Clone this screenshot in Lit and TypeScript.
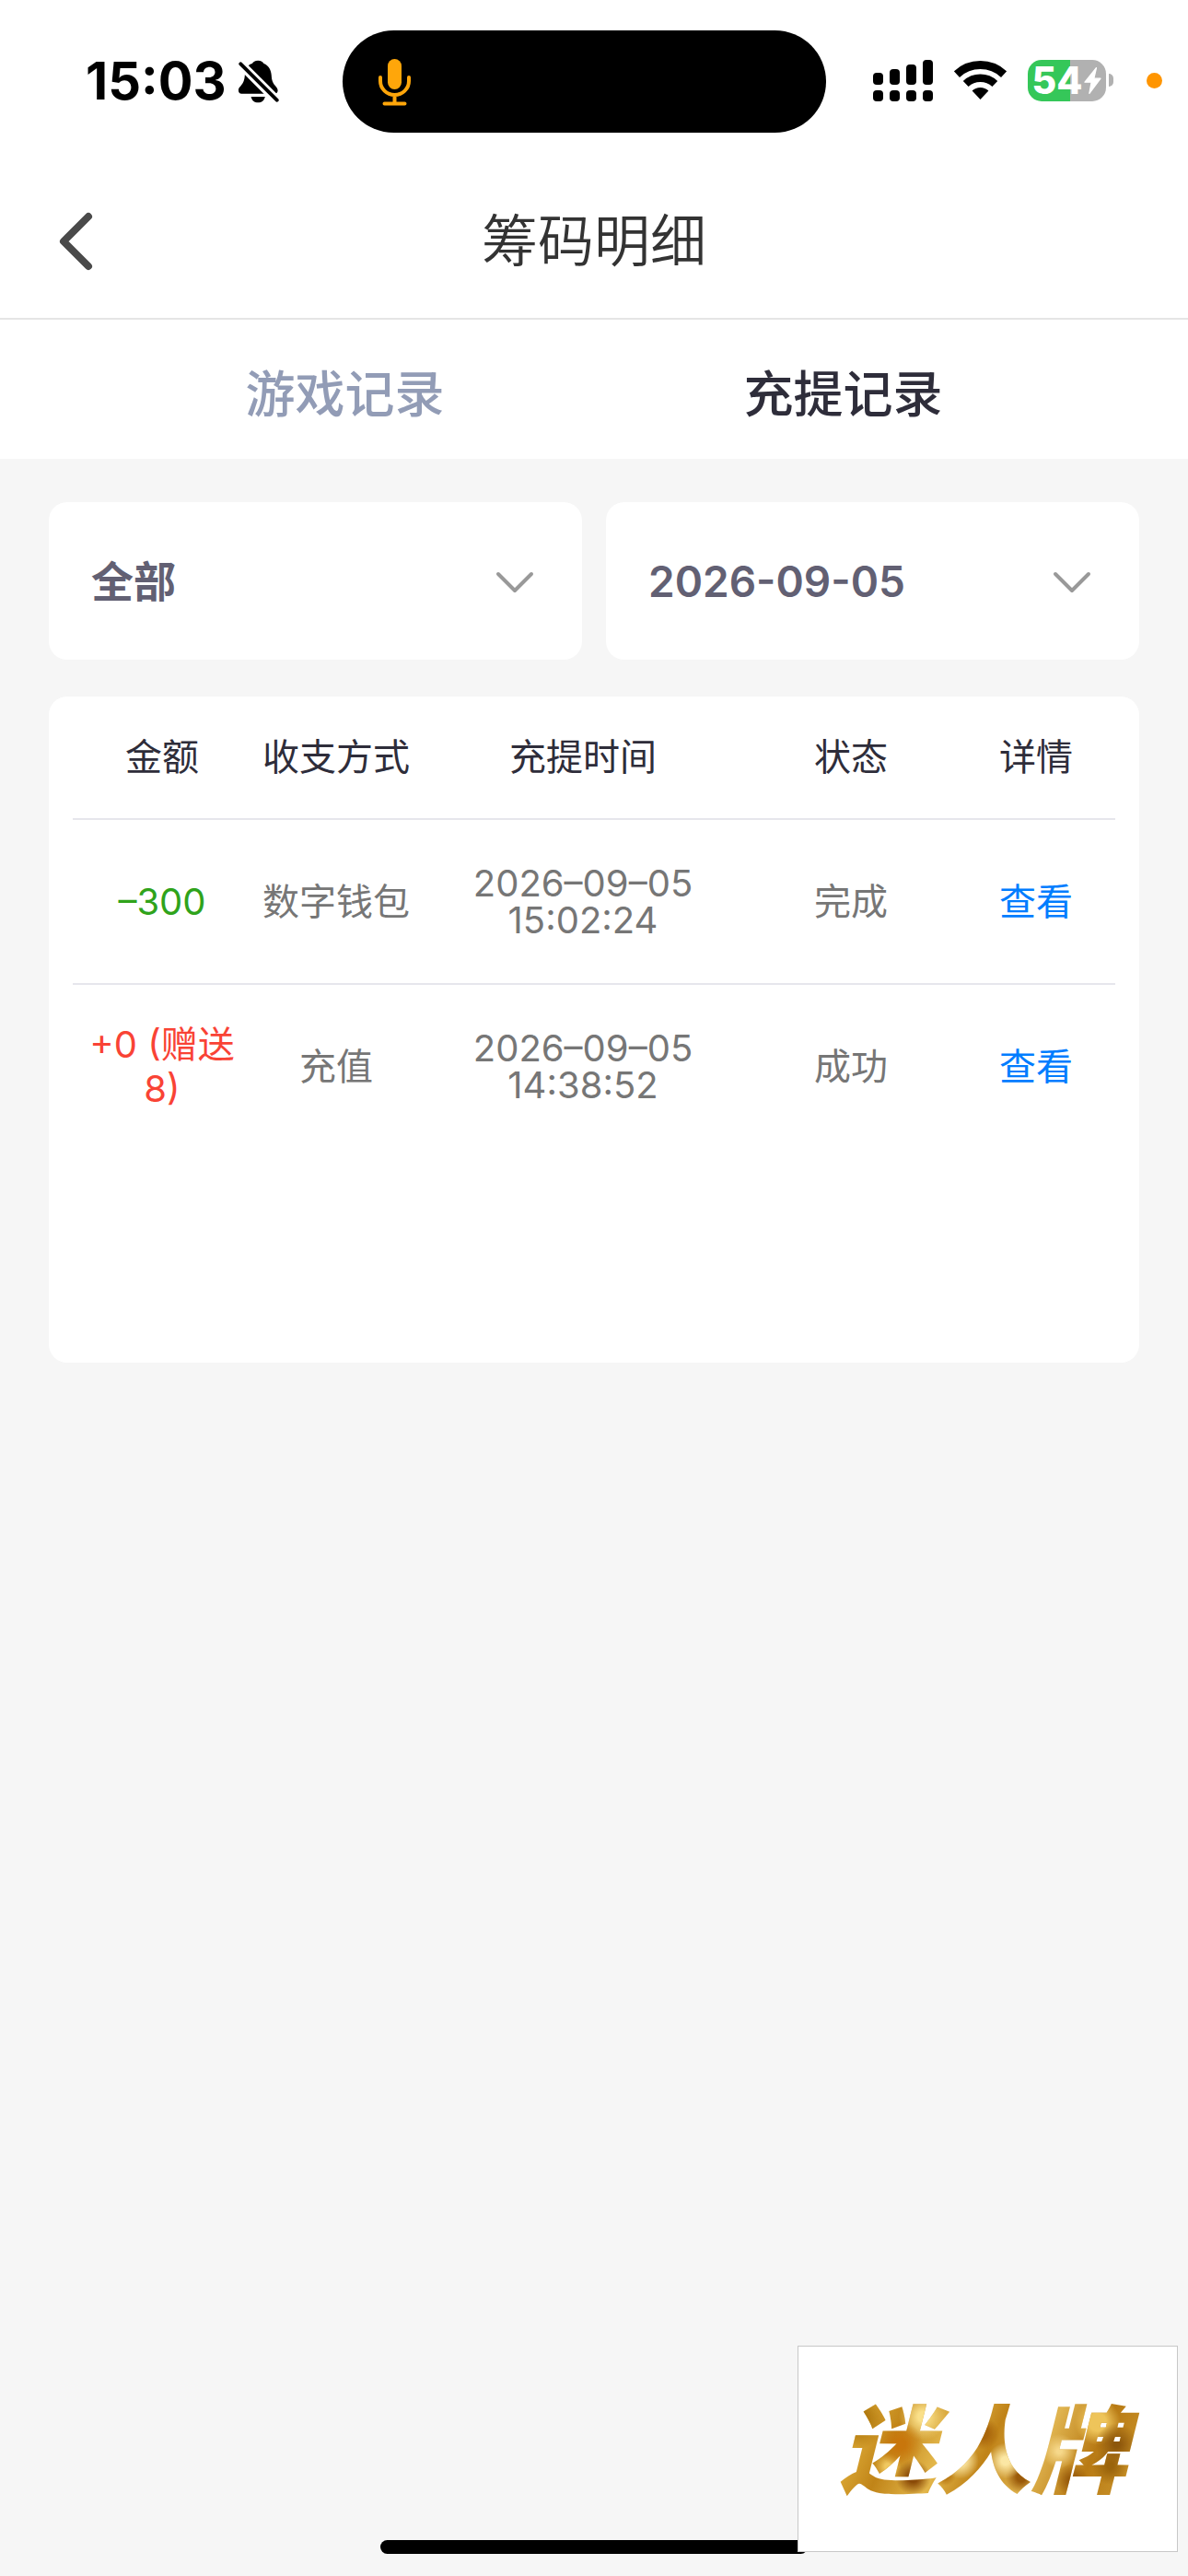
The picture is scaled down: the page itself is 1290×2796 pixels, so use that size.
import { LitElement, html, css, svg } from "lit";
import { customElement, state } from "lit/decorators.js";

interface LedgerRow {
  amount: string;
  tone: "out" | "in";
  method: string;
  date: string;
  time: string;
  status: string;
}

const ROWS: LedgerRow[] = [
  { amount: "–300", tone: "out", method: "数字钱包", date: "2026–09–05", time: "15:02:24", status: "完成" },
  { amount: "+0 (赠送8)", tone: "in", method: "充值", date: "2026–09–05", time: "14:38:52", status: "成功" },
];

const SIGNAL_BARS = [
  { x: 0, y: 14 },
  { x: 18, y: 10 },
  { x: 36, y: 5 },
  { x: 54, y: 0 },
];

@customElement("status-bar")
export class StatusBar extends LitElement {
  static styles = css`
    :host {
      display: grid;
      grid-template-columns: 372fr 525fr 393fr;
      align-items: center;
      padding: 33px 0 34px;
      color: #000;
    }
    .left {
      display: flex;
      align-items: center;
      gap: 12px;
      padding: 0 0 1px 93px;
    }
    .clock {
      font-size: 56px;
      line-height: 56px;
      font-weight: 700;
    }
    .island {
      box-sizing: border-box;
      display: flex;
      align-items: center;
      height: 111px;
      padding: 0 39px;
      border-radius: 56px;
      background: #000;
    }
    .right {
      display: flex;
      align-items: center;
      justify-content: flex-end;
      padding: 0 28px 3px 0;
    }
    .wifi {
      margin: 0 23px;
    }
    .battery {
      display: flex;
      align-items: center;
      justify-content: center;
      gap: 2px;
      width: 85px;
      height: 45px;
      border-radius: 15px;
      background: linear-gradient(90deg, #35c759 54%, #b1b1b1 54%);
      color: #fff;
      font-size: 41px;
      line-height: 45px;
      font-weight: 800;
    }
    .nub {
      width: 5px;
      height: 14px;
      margin: 0 36px 0 3px;
      border-radius: 0 7px 7px 0;
      background: #b1b1b1;
    }
    .dot {
      width: 17px;
      height: 17px;
      border-radius: 50%;
      background: #ff9500;
    }
    svg {
      display: block;
      flex: none;
    }
  `;

  render() {
    return html`
      <div class="left">
        <span class="clock">15:03</span>
        <svg width="45" height="47" viewBox="54 42 134 142" aria-hidden="true">
          <path d="M120 44C110 44 104 48 101 54C86 58 79 70 77 88C76 112 70 120 60 131C52 140 56 153 66 153H174C186 153 188 140 180 131C168 118 165 110 164 92C163 74 154 60 139 54C136 48 130 44 120 44Z" />
          <path d="M97 163H143C140 176 132 182 120 182C108 182 100 176 97 163Z" />
          <path d="M56 49L190 183" stroke="#fff" stroke-width="30" />
          <path d="M63 55L182 174" stroke="#000" stroke-width="12" stroke-linecap="round" />
        </svg>
      </div>
      <div class="island">
        <svg width="35" height="52" viewBox="0 0 35 52" fill="none" stroke="#ffa60a" stroke-width="4" stroke-linecap="round" aria-hidden="true">
          <rect x="10" y="1" width="15" height="33" rx="7.5" fill="#ffa60a" stroke="none" />
          <path d="M2 21v4a15.5 15 0 0 0 31 0v-4M17.5 40v9M6.5 49.5h22" />
        </svg>
      </div>
      <div class="right">
        <svg width="65" height="45" viewBox="0 0 65 45" aria-hidden="true">
          ${SIGNAL_BARS.map(
            (bar) => svg`
              <rect x=${bar.x} y=${bar.y} width="11" height=${27 - bar.y} rx="4" />
              <rect x=${bar.x} y="33" width="11" height="12" rx="4" />`
          )}
        </svg>
        <svg class="wifi" width="57" height="42" viewBox="0 0 57 42" fill="none" stroke="#000" aria-hidden="true">
          <path d="M2.9 14.6A37.5 37.5 0 0 1 54.1 14.6" stroke-width="9" />
          <path d="M12.7 25A23.2 23.2 0 0 1 44.3 25" stroke-width="8.5" />
          <path d="M28.5 42L19.6 32.5A13 13 0 0 1 37.4 32.5Z" fill="#000" stroke="none" />
        </svg>
        <div class="battery">
          <span>54</span>
          <svg width="19" height="31" viewBox="746 64 58 92" fill="#fff" stroke="#fff" stroke-width="4" stroke-linejoin="round" aria-hidden="true">
            <path d="M787 68L749 115H771L764 152L801 103H779Z" />
          </svg>
        </div>
        <span class="nub"></span>
        <span class="dot"></span>
      </div>
    `;
  }
}

@customElement("filter-select")
export class FilterSelect extends LitElement {
  static properties = {
    label: { type: String },
    options: { type: Array },
  };
  declare label: string;
  declare options: string[];

  constructor() {
    super();
    this.label = "";
    this.options = [];
  }

  static styles = css`
    :host {
      display: block;
    }
    .field {
      display: grid;
      align-items: center;
      border-radius: 20px;
      background: #fff;
    }
    .box {
      grid-area: 1 / 1;
      appearance: none;
      width: 100%;
      height: 171px;
      padding: 0 120px 0 46px;
      border: 0;
      border-radius: 20px;
      background: transparent;
      color: #626073;
      font: inherit;
      font-size: 46px;
      font-weight: 600;
    }
    .arrow {
      grid-area: 1 / 1;
      justify-self: end;
      margin: 2px 52px 0 0;
      pointer-events: none;
    }
  `;

  render() {
    return html`
      <div class="field">
        <select class="box" aria-label=${this.label}>
          ${this.options.map((option) => html`<option>${option}</option>`)}
        </select>
        <svg class="arrow" width="42" height="24" viewBox="0 0 42 24" fill="none" stroke="#999" stroke-width="4" stroke-linecap="round" stroke-linejoin="round" aria-hidden="true">
          <path d="M3 3L21 21L39 3" />
        </svg>
      </div>
    `;
  }
}

@customElement("app-root")
export class AppRoot extends LitElement {
  @state() private tab = 1;

  static styles = css`
    :host {
      display: block;
      position: relative;
      min-height: 100vh;
      background: #f6f6f6;
      font-family: Inter, "Noto Sans CJK SC", sans-serif;
    }
    .top {
      background: #fff;
    }
    .header {
      display: grid;
      grid-template-columns: 140px 1fr 140px;
      align-items: center;
      height: 167px;
      border-bottom: 2px solid #e5e5e5;
    }
    .back {
      display: flex;
      padding: 20px 20px 20px 62px;
      border: 0;
      background: none;
    }
    .title {
      margin: 0;
      text-align: center;
      color: #333;
      font-size: 61px;
      line-height: 80px;
      font-weight: 350;
    }
    .tabs {
      display: grid;
      grid-template-columns: 1fr 1fr;
      height: 151px;
      padding: 0 104px;
    }
    .tab {
      padding: 4px 0 0;
      border: 0;
      background: none;
      color: #929cb6;
      font: inherit;
      font-size: 54px;
      font-weight: 500;
    }
    .tab.active {
      color: #2e2d3a;
    }
    .content {
      display: grid;
      gap: 40px;
      padding: 47px 53px 0;
    }
    .filters {
      display: grid;
      grid-template-columns: 1fr 1fr;
      gap: 26px;
    }
    .card {
      min-height: 723px;
      box-sizing: border-box;
      padding: 0 26px;
      border-radius: 20px;
      background: #fff;
    }
    .ledger {
      width: 100%;
      table-layout: fixed;
      border-collapse: collapse;
      color: #767676;
      font-size: 40px;
      line-height: 48px;
      text-align: center;
    }
    .amount-col {
      width: 194px;
    }
    .method-col {
      width: 184px;
    }
    .time-col {
      width: 352px;
    }
    .status-col {
      width: 230px;
    }
    .detail-col {
      width: 172px;
    }
    .ledger th {
      height: 132px;
      padding: 0;
      border-bottom: 2px solid #e6e6ec;
      color: #2e2d3a;
      font-weight: 400;
    }
    .ledger td {
      height: 177px;
      padding: 0;
    }
    .ledger .row + .row td {
      border-top: 2px solid #e6e6ec;
    }
    .ledger .amount {
      padding: 0 12px;
    }
    .ledger .stamp {
      line-height: 40px;
    }
    .out {
      color: #2fa31b;
    }
    .in {
      color: #f94335;
    }
    .link {
      color: #007dff;
      text-decoration: none;
    }
    .home {
      position: absolute;
      left: 32%;
      right: 32%;
      bottom: 24px;
      height: 15px;
      border-radius: 8px;
      background: #000;
    }
    .brand {
      position: absolute;
      right: 11px;
      bottom: 26px;
      box-sizing: border-box;
      display: flex;
      align-items: center;
      justify-content: center;
      width: 413px;
      height: 224px;
      padding: 0 10px 10px 0;
      border: 1px solid #c8c8c8;
      background: #fff;
    }
    .brand-name {
      padding: 0 16px;
      background:
        radial-gradient(circle at 24% 50%, #c8760c 0 2%, transparent 9%),
        radial-gradient(circle at 31% 30%, #fae08a 0 2%, transparent 10%),
        radial-gradient(circle at 10% 32%, #b27a10 0 4%, transparent 10%),
        radial-gradient(circle at 28% 74%, #8a4a08 0 2%, transparent 7%),
        radial-gradient(circle at 20% 66%, #f0c860 0 1%, transparent 5%),
        radial-gradient(circle at 43% 62%, #fbe7a4 0 2%, transparent 9%),
        radial-gradient(circle at 38% 72%, #b06c0a 0 1%, transparent 5%),
        radial-gradient(circle at 50% 42%, #a9660c 0 3%, transparent 9%),
        radial-gradient(circle at 57% 62%, #fbe7a4 0 2%, transparent 9%),
        radial-gradient(circle at 62% 74%, #9a5a0a 0 2%, transparent 7%),
        radial-gradient(circle at 74% 55%, #f6d88a 0 1%, transparent 7%),
        radial-gradient(circle at 78% 76%, #94570a 0 1%, transparent 6%),
        radial-gradient(circle at 92% 50%, #8d570c 0 1%, transparent 7%),
        radial-gradient(circle at 86% 34%, #eec45a 0 3%, transparent 8%),
        radial-gradient(circle at 90% 66%, #9a640c 0 1%, transparent 6%),
        linear-gradient(115deg, #b57d14, #e0ae3a 14%, #c08418 26%, #e4b84c 40%, #c08318 52%, #e0b450 66%, #b87a14 80%, #d2a036);
      -webkit-background-clip: text;
      background-clip: text;
      color: transparent;
      font-family: "Noto Sans CJK SC", sans-serif;
      font-size: 104px;
      line-height: 150px;
      font-weight: 900;
      font-style: italic;
    }
  `;

  render() {
    return html`
      <div class="top">
        <status-bar></status-bar>
        <header class="header">
          <button class="back" aria-label="返回">
            <svg width="40" height="64" viewBox="0 0 40 64" fill="none" stroke="#4a4a4a" stroke-width="8" stroke-linecap="round" stroke-linejoin="round" aria-hidden="true">
              <path d="M34 5L7 32L34 59" />
            </svg>
          </button>
          <h1 class="title">筹码明细</h1>
        </header>
        <nav class="tabs">
          ${["游戏记录", "充提记录"].map(
            (name, i) => html`
              <button class="tab ${this.tab === i ? "active" : ""}" @click=${() => (this.tab = i)}>${name}</button>
            `
          )}
        </nav>
      </div>
      <main class="content">
        <div class="filters">
          <filter-select label="类型" .options=${["全部"]}></filter-select>
          <filter-select label="日期" .options=${["2026-09-05"]}></filter-select>
        </div>
        <section class="card">
          <table class="ledger">
            <colgroup>
              <col class="amount-col" />
              <col class="method-col" />
              <col class="time-col" />
              <col class="status-col" />
              <col class="detail-col" />
            </colgroup>
            <thead>
              <tr>
                <th>金额</th>
                <th>收支方式</th>
                <th>充提时间</th>
                <th>状态</th>
                <th>详情</th>
              </tr>
            </thead>
            <tbody>
              ${ROWS.map(
                (row) => html`
                  <tr class="row">
                    <td class="amount ${row.tone}">${row.amount}</td>
                    <td>${row.method}</td>
                    <td class="stamp">${`${row.date} ${row.time}`}</td>
                    <td>${row.status}</td>
                    <td><a class="link" href="#detail">查看</a></td>
                  </tr>
                `
              )}
            </tbody>
          </table>
        </section>
      </main>
      <div class="home"></div>
      <aside class="brand"><span class="brand-name">迷人牌</span></aside>
    `;
  }
}
